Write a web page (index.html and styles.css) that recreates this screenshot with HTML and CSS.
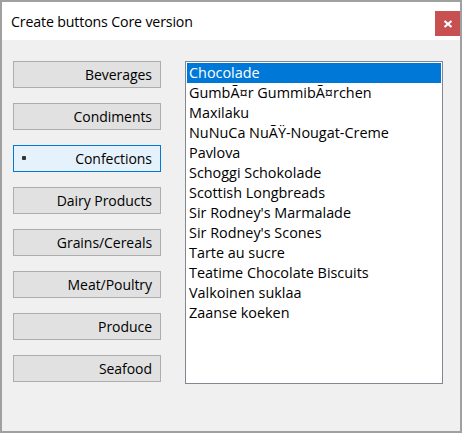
FILE: index.html
```html
<!DOCTYPE html>
<html>
<head>
<meta charset="utf-8">
<link rel="stylesheet" href="styles.css">
</head>
<body>
<div class="window">
  <div class="titlebar">
    <span class="title">Create buttons Core version</span>
    <button class="close" aria-label="Close">
      <svg width="10" height="10" viewBox="0 0 10 10"><path d="M1.5 2 L8.5 8 M8.5 2 L1.5 8" stroke="#fff" stroke-width="2.2"/></svg>
    </button>
  </div>
  <div class="content">
    <div class="buttons">
      <div class="btn">Beverages</div>
      <div class="btn">Condiments</div>
      <div class="btn active"><span class="dot"></span>Confections</div>
      <div class="btn">Dairy Products</div>
      <div class="btn">Grains/Cereals</div>
      <div class="btn">Meat/Poultry</div>
      <div class="btn">Produce</div>
      <div class="btn">Seafood</div>
    </div>
    <div class="listbox">
      <div class="item selected">Chocolade</div>
      <div class="item">GumbÃ¤r GummibÃ¤rchen</div>
      <div class="item">Maxilaku</div>
      <div class="item">NuNuCa NuÃŸ-Nougat-Creme</div>
      <div class="item">Pavlova</div>
      <div class="item">Schoggi Schokolade</div>
      <div class="item">Scottish Longbreads</div>
      <div class="item">Sir Rodney's Marmalade</div>
      <div class="item">Sir Rodney's Scones</div>
      <div class="item">Tarte au sucre</div>
      <div class="item">Teatime Chocolate Biscuits</div>
      <div class="item">Valkoinen suklaa</div>
      <div class="item">Zaanse koeken</div>
    </div>
  </div>
</div>
</body>
</html>
```
FILE: styles.css
```css
* { box-sizing: border-box; }
html, body { margin: 0; padding: 0; }
body {
  width: 462px;
  height: 433px;
  font-family: "Open Sans", "Noto Sans", sans-serif;
  color: #000;
}
.window {
  width: 462px;
  height: 433px;
  border: 2px solid #a0a0a0;
  background: #f0f0f0;
  display: flex;
  flex-direction: column;
}
.titlebar {
  height: 38px;
  background: #fff;
  display: flex;
  align-items: flex-start;
  justify-content: space-between;
}
.title {
  font-size: 14.2px;
  padding: 10px 0 0 9px;
  letter-spacing: -0.15px;
}
.close {
  margin-top: 9px;
  width: 25px;
  height: 25px;
  border: none;
  padding: 0;
  background: #c75050;
  display: flex;
  align-items: center;
  justify-content: center;
}
.content {
  display: flex;
  padding: 21px 0 0 11px;
  gap: 24px;
}
.buttons {
  display: flex;
  flex-direction: column;
  gap: 15px;
  width: 148px;
}
.btn {
  height: 27px;
  background: #e1e1e1;
  border: 1px solid #adadad;
  font-size: 14px;
  display: flex;
  align-items: center;
  justify-content: flex-end;
  padding-right: 8px;
  position: relative;
  letter-spacing: -0.05px;
}
.btn.active {
  background: #e5f1fb;
  border-color: #0078d7;
}
.dot {
  position: absolute;
  left: 8px;
  top: 10px;
  width: 4px;
  height: 4px;
  border-radius: 1px;
  background: #333;
}
.listbox {
  width: 258px;
  height: 323px;
  background: #fff;
  border: 1px solid #828790;
  padding: 1px;
}
.item {
  height: 20px;
  line-height: 20px;
  font-size: 14.4px;
  padding-left: 2px;
  white-space: nowrap;
}
.item.selected {
  background: #0078d7;
  color: #fff;
}
```
